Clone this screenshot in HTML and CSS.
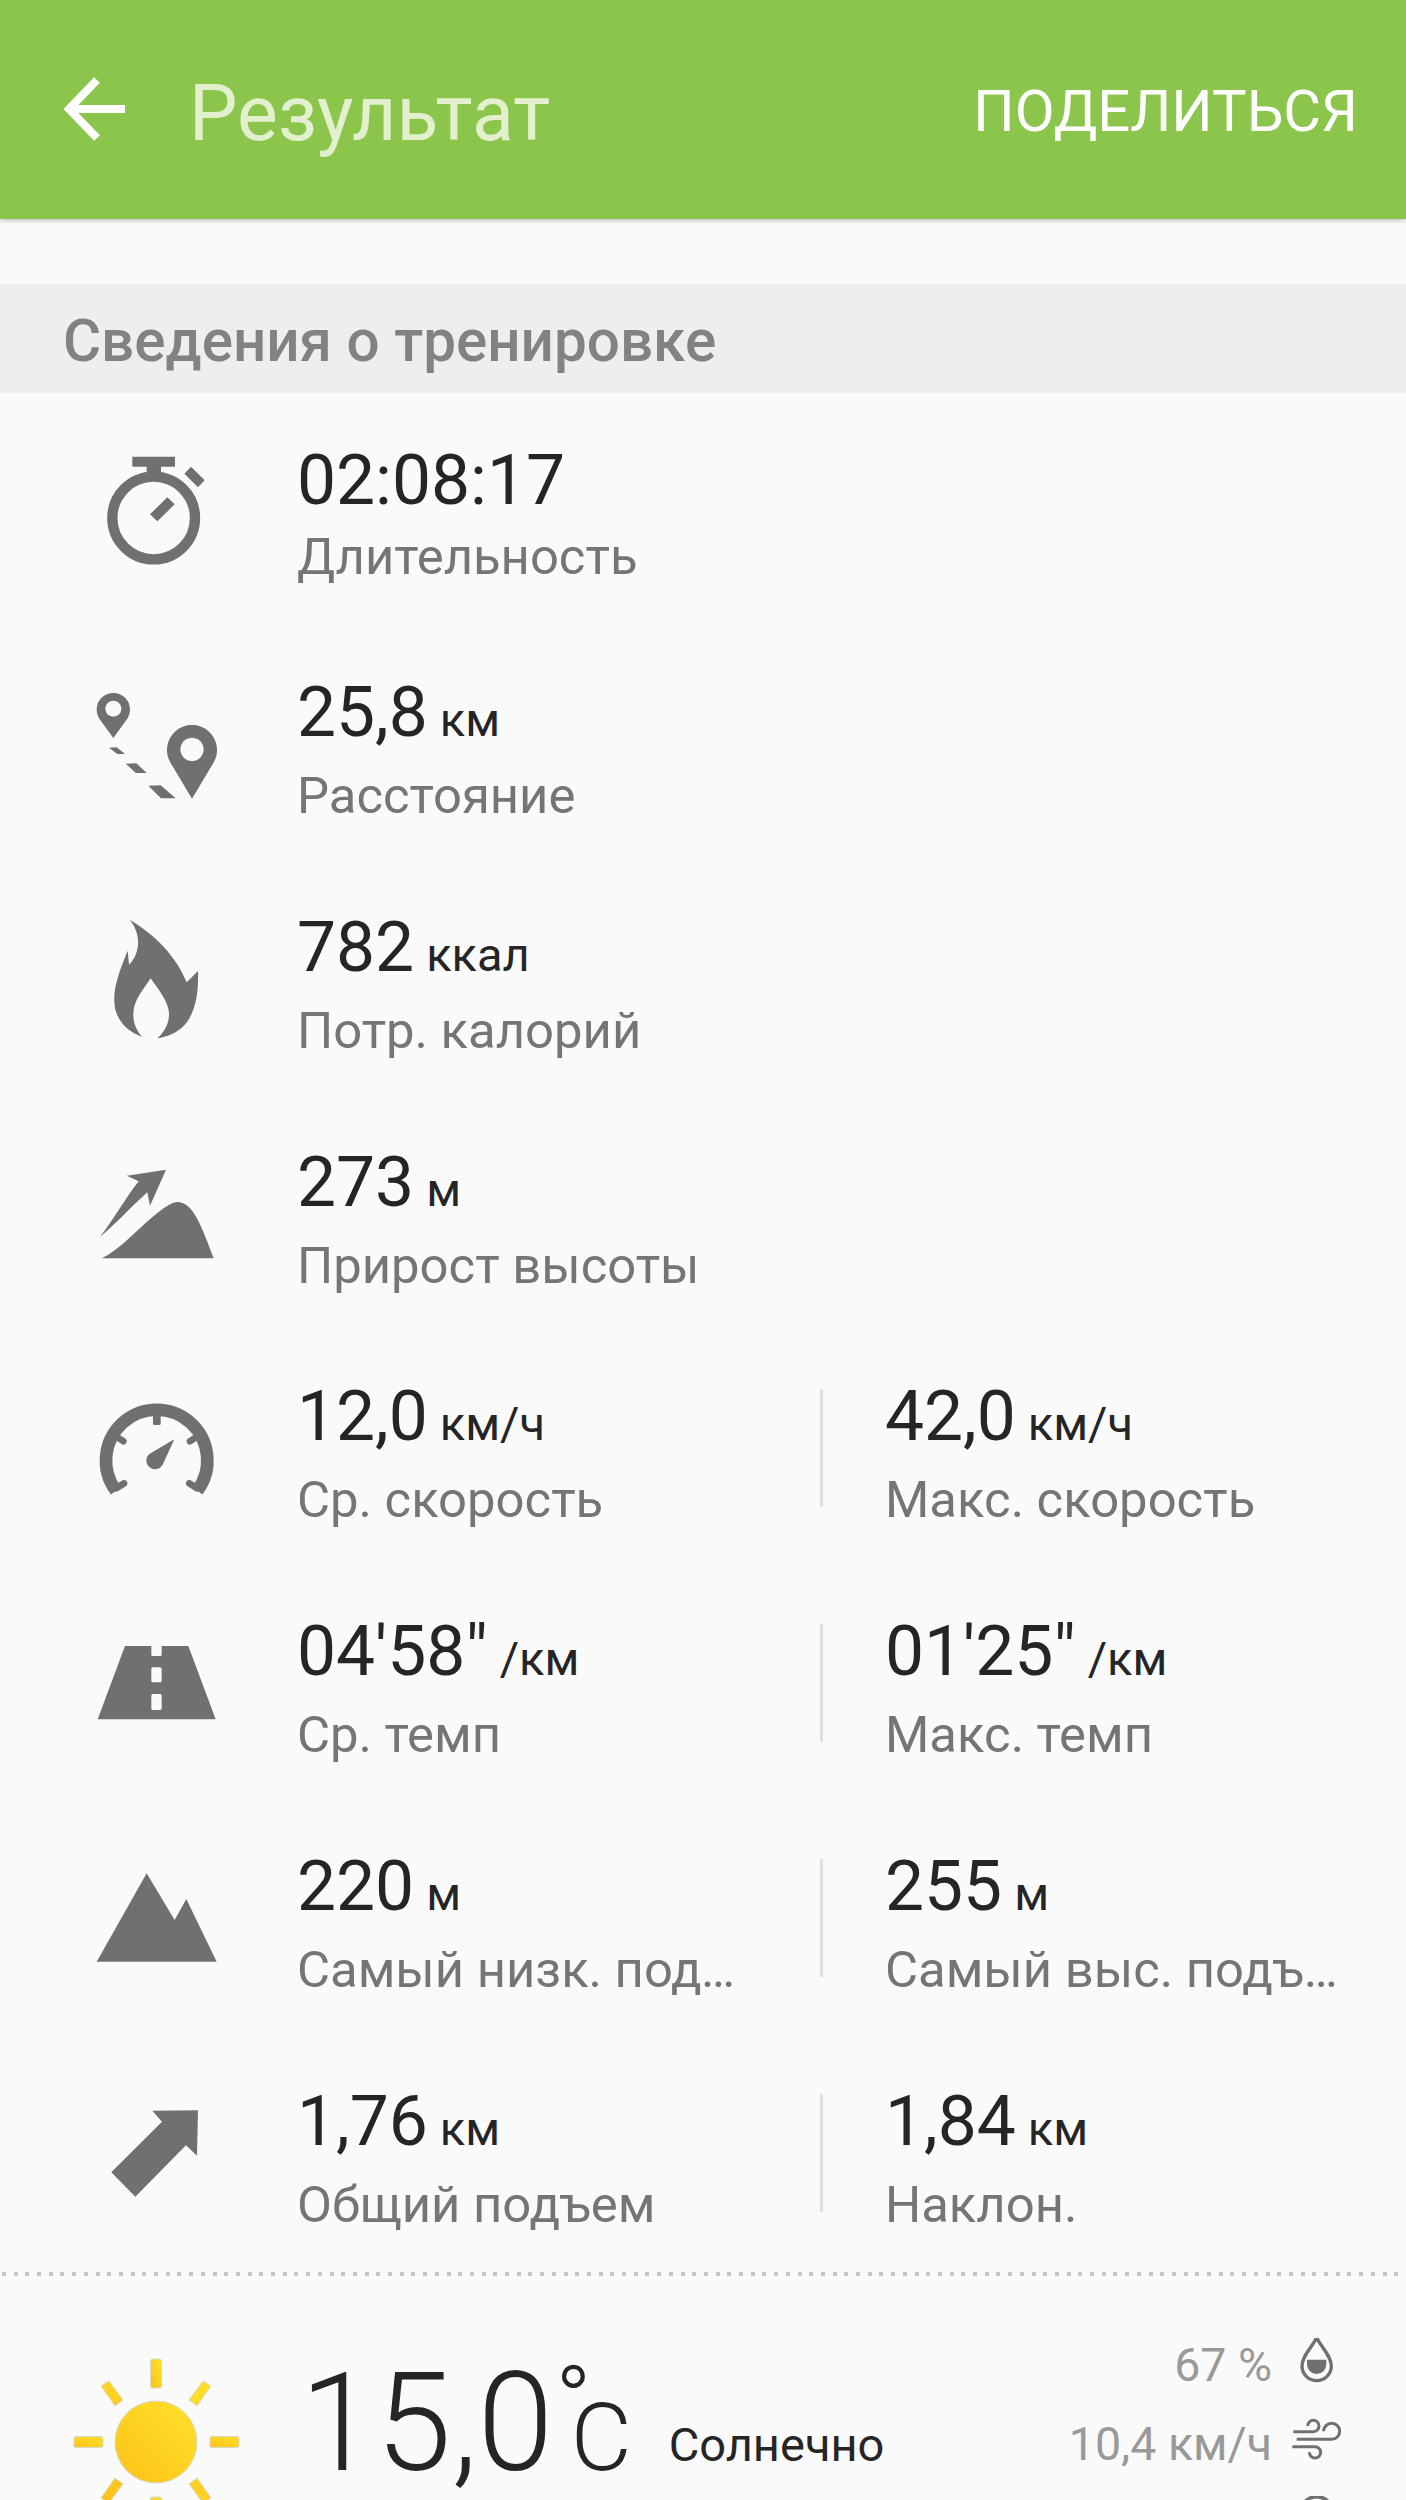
FILE: index.html

```html
<!DOCTYPE html>
<html lang="ru">
<head>
  <meta charset="UTF-8">
  <title>Результат</title>
  <link rel="stylesheet" href="styles.css">
</head>
<body>

  <header class="app-bar">
    <svg class="back-icon" viewBox="0 0 70 70"><path d="M37 5L9 34L37 63M10 34H65" /></svg>
    <h1>Результат</h1>
    <span class="share">ПОДЕЛИТЬСЯ</span>
  </header>

  <h2 class="section-title">Сведения о тренировке</h2>

  <section class="stats">

    <div class="row">
      <svg class="icon" viewBox="0 -29 600 600">
        <path d="M217 111H345V141H303V170H260V141H217Z M393 141L434 182L414 203L373 162Z M322 233L344 254L292 305L270 284Z" />
        <circle cx="281" cy="295" r="124" fill="none" stroke="#707070" stroke-width="31" />
      </svg>
      <div class="stat">
        <div class="value">02:08:17</div>
        <div class="label">Длительность</div>
      </div>
    </div>

    <div class="row">
      <svg class="icon" viewBox="0 676 600 600">
        <path fill-rule="evenodd" d="M160 955L118 897A50 50 0 1 1 202 897Z M160 843A24 24 0 1 0 160.100 843Z" />
        <path fill-rule="evenodd" d="M396 1137L332 1030A75 75 0 1 1 460 1030Z M396 954A35 35 0 1 0 396.100 954Z" />
        <path d="M147 984L170 983L195 1003L172 1003Z M197 1032L229 1031L260 1060L228 1060Z M265 1098L302 1097L347 1136L303 1136Z" />
      </svg>
      <div class="stat">
        <div class="value">25,8<span class="unit">км</span></div>
        <div class="label">Расстояние</div>
      </div>
    </div>

    <div class="row">
      <svg class="icon" viewBox="0 1 600 600">
        <path d="M209 120C260 150 340 210 380 308L414 274C416 330 410 400 370 440C350 460 320 472 292 476C315 455 328 430 327 400C325 365 295 330 272 296C250 330 222 360 220 400C219 430 230 455 247 471C210 460 175 430 165 385C155 330 180 270 203 213L207 255C235 230 250 170 209 120Z" />
      </svg>
      <div class="stat">
        <div class="value">782<span class="unit">ккал</span></div>
        <div class="label">Потр. калорий</div>
      </div>
    </div>

    <div class="row">
      <svg class="icon" viewBox="0 706 600 600">
        <path d="M318 870L200 888L236 905C200 950 160 1020 120 1072C170 1030 220 975 262 938L270 978Z" />
        <path d="M125 1136C180 1110 220 1060 280 1010C310 985 335 966 355 967C400 970 425 1040 461 1136Z" />
      </svg>
      <div class="stat">
        <div class="value">273<span class="unit">м</span></div>
        <div class="label">Прирост высоты</div>
      </div>
    </div>

    <div class="row">
      <svg class="icon" viewBox="0 30 600 600">
        <path d="M168 452A152 152 0 1 1 412 452" fill="none" stroke="#707070" stroke-width="38" />
        <rect x="279" y="225" width="23" height="30" rx="4" />
        <path d="M172 292L190 304M408 292L390 304M168 445L192 430M412 445L388 430" stroke="#707070" stroke-width="20" stroke-linecap="round" />
        <path d="M343 298L308 374A26 26 0 1 1 268 342Z" />
      </svg>
      <div class="stat">
        <div class="value">12,0<span class="unit">км/ч</span></div>
        <div class="label">Ср. скорость</div>
      </div>
      <div class="divider"></div>
      <div class="stat second">
        <div class="value">42,0<span class="unit">км/ч</span></div>
        <div class="label">Макс. скорость</div>
      </div>
    </div>

    <div class="row">
      <svg class="icon" viewBox="0 735 600 600">
        <path d="M195 918H385L467 1138H113Z" />
        <rect class="cut" x="274" y="912" width="31" height="36" rx="4" />
        <rect class="cut" x="274" y="982" width="31" height="45" rx="5" />
        <rect class="cut" x="274" y="1062" width="31" height="48" rx="5" />
      </svg>
      <div class="stat">
        <div class="value">04'58"<span class="unit">/км</span></div>
        <div class="label">Ср. темп</div>
      </div>
      <div class="divider"></div>
      <div class="stat second">
        <div class="value">01'25"<span class="unit">/км</span></div>
        <div class="label">Макс. темп</div>
      </div>
    </div>

    <div class="row">
      <svg class="icon" viewBox="0 0 600 600">
        <path d="M260 160L344 300L379 237L470 425H110Z" />
      </svg>
      <div class="stat">
        <div class="value">220<span class="unit">м</span></div>
        <div class="label">Самый низк. подъем</div>
      </div>
      <div class="divider"></div>
      <div class="stat second">
        <div class="value">255<span class="unit">м</span></div>
        <div class="label">Самый выс. подъем</div>
      </div>
    </div>

    <div class="row">
      <svg class="icon" viewBox="0 705 600 600">
        <path d="M277 872L414 871L411 1007L378 976L226 1130L154 1057L306 905Z" />
      </svg>
      <div class="stat">
        <div class="value">1,76<span class="unit">км</span></div>
        <div class="label">Общий подъем</div>
      </div>
      <div class="divider"></div>
      <div class="stat second">
        <div class="value">1,84<span class="unit">км</span></div>
        <div class="label">Наклон.</div>
      </div>
    </div>

  </section>

  <div class="dots"></div>

  <section class="weather">
    <svg class="sun" viewBox="0 0 170 170">
      <defs>
        <linearGradient id="sunFill" x1="0" y1="1" x2="1" y2="0">
          <stop offset="0" stop-color="#fdc218" />
          <stop offset="1" stop-color="#ffe12a" />
        </linearGradient>
      </defs>
      <g fill="url(#sunFill)" stroke="#d9d9c8" stroke-width="1">
        <circle cx="85" cy="85" r="41" />
        <rect x="79.500" y="2" width="11" height="29" rx="2" />
        <rect x="79.500" y="140" width="11" height="29" rx="2" />
        <rect x="3" y="79.500" width="29" height="11" rx="2" />
        <rect x="139" y="79.500" width="29" height="11" rx="2" />
        <path d="M30 29L38 24L52 43L44 49Z M140 29L132 24L118 43L126 49Z M30 141L38 146L52 127L44 121Z M140 141L132 146L118 127L126 121Z" />
      </g>
    </svg>
    <div class="temp">15,0<span class="deg">°</span><span class="deg-unit">C</span></div>
    <div class="condition">Солнечно</div>
    <div class="conditions">
      <div class="cond-row">
        <span>67 %</span>
        <svg class="cond-icon" viewBox="24 21 162 162">
          <path d="M110 20C95 50 66 75 66 105A44 44 0 0 0 154 105C154 75 125 50 110 20Z" fill="none" stroke="#707070" stroke-width="10" />
          <path d="M81 86H139V100A29 29 0 0 1 81 100Z" />
        </svg>
      </div>
      <div class="cond-row">
        <span>10,4 км/ч</span>
        <svg class="cond-icon" viewBox="24 258 162 162">
          <g fill="none" stroke="#707070" stroke-width="9">
            <path d="M40 302H100A17 17 0 1 0 83 285" />
            <path d="M50 325H155A24 24 0 1 0 131 301" />
            <path d="M37 347H105A17 17 0 1 1 88 364" />
          </g>
        </svg>
      </div>
      <div class="cond-row">
        <span></span>
        <svg class="cond-icon" viewBox="24 495 162 162">
          <circle cx="110" cy="545" r="48" fill="none" stroke="#707070" stroke-width="11" />
        </svg>
      </div>
    </div>
  </section>

</body>
</html>
```

FILE: styles.css

```css
html, body {
  height: 2500px;
  overflow: hidden;
}

body {
  margin: 0;
  background-color: #fafafa;
  color: #252525;
  font-family: Roboto, "Liberation Sans", sans-serif;
}

.app-bar {
  display: flex;
  align-items: center;
  height: 219px;
  padding: 0 48px 0 60px;
  box-sizing: border-box;
  background-color: #8bc54b;
  box-shadow: 0 2px 4px rgba(0, 0, 0, 0.2);
}

.back-icon {
  width: 70px;
  height: 70px;
  fill: none;
  stroke: #fff;
  stroke-width: 8;
}

.app-bar h1 {
  margin: 8px 0 0 59px;
  font-size: 77px;
  font-weight: 400;
  color: #e2f0cd;
}

.share {
  margin: 2px 0 0 auto;
  font-size: 58px;
  font-weight: 400;
  color: #fff;
}

.section-title {
  height: 109px;
  margin: 65px 0 0;
  padding-left: 63px;
  background-color: #eeeeee;
  color: #828282;
  font-size: 58.400px;
  font-weight: 500;
  line-height: 114px;
}

.row {
  display: flex;
  align-items: center;
  height: 234.875px;
  padding-top: 14px;
  box-sizing: border-box;
}

.icon {
  flex: none;
  width: 200px;
  height: 200px;
  margin: -14px 37px 0 60px;
  fill: #707070;
}

.cut {
  fill: #fafafa;
}

.stat {
  flex: none;
  width: 446px;
}

.stat.second {
  width: 457px;
}

.divider {
  flex: none;
  width: 3px;
  height: 118px;
  margin: -18px 62px 0 77px;
  background-color: #e0e0e0;
}

.value {
  font-size: 69.500px;
  line-height: 80px;
}

.unit {
  margin-left: 12px;
  font-size: 47px;
}

.label {
  overflow: hidden;
  color: #757575;
  font-size: 50.800px;
  line-height: 72px;
  white-space: nowrap;
  text-overflow: ellipsis;
}

.dots {
  height: 4px;
  margin-left: 2px;
  background-image: repeating-linear-gradient(to right, #c6c6c6 0, #c6c6c6 4px, transparent 4px, transparent 11.700px);
}

.weather {
  display: flex;
  align-items: center;
  height: 336px;
}

.sun {
  flex: none;
  width: 170px;
  height: 170px;
  margin: 0 59px 4px 71px;
}

.temp {
  flex: none;
  margin-bottom: 50px;
  font-size: 136.500px;
  font-weight: 300;
  line-height: 160px;
}

.deg {
  margin-left: 2px;
  font-size: 96px;
  vertical-align: 36px;
}

.deg-unit {
  margin-left: -21px;
  font-size: 94px;
}

.condition {
  flex: none;
  margin: 0 0 0 37px;
  font-size: 47px;
}

.conditions {
  margin-left: auto;
  padding-right: 64px;
  color: #999999;
  font-size: 46.500px;
}

.cond-row {
  display: flex;
  align-items: center;
  justify-content: flex-end;
  height: 79px;
  gap: 16px;
}

.cond-icon {
  flex: none;
  width: 54px;
  height: 54px;
  fill: #707070;
}
```
